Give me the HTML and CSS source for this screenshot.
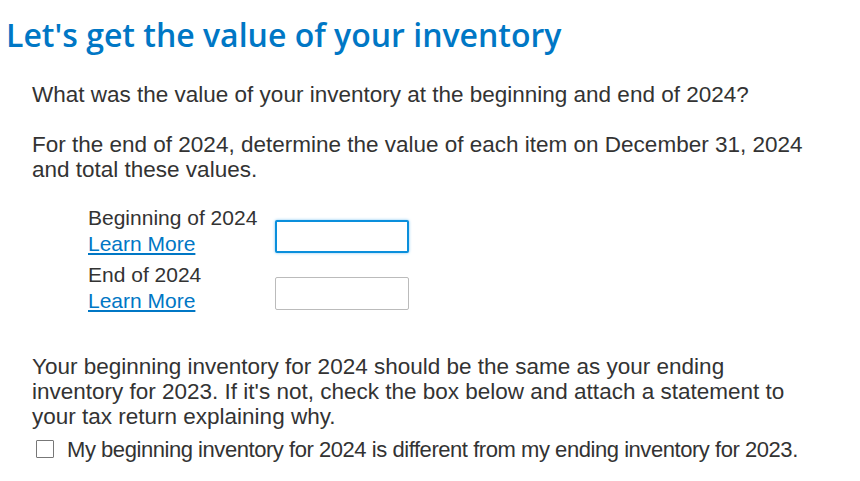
FILE: index.html
```html
<!DOCTYPE html>
<html lang="en">
<head>
    <meta charset="UTF-8">
    <meta name="viewport" content="width=device-width, initial-scale=1.0">
    <title>Inventory</title>
    <link rel="stylesheet" href="styles.css">
</head>
<body>
    <h1 class="title">Let's get the value of your inventory</h1>
    <div class="content">
        <p class="text">What was the value of your inventory at the beginning and end of 2024?</p>
        <p class="text">For the end of 2024, determine the value of each item on December 31, 2024 and total these values.</p>

        <div class="fields">
            <div class="field">
                <div class="field-label">
                    <span>Beginning of 2024</span>
                    <a href="#" class="learn">Learn More</a>
                </div>
                <input type="text" class="amount focused">
            </div>
            <div class="field">
                <div class="field-label">
                    <span>End of 2024</span>
                    <a href="#" class="learn">Learn More</a>
                </div>
                <input type="text" class="amount">
            </div>
        </div>

        <p class="text note">Your beginning inventory for 2024 should be the same as your ending inventory for 2023. If it's not, check the box below and attach a statement to your tax return explaining why.</p>
        <label class="check">
            <span class="box"></span>
            <span class="check-text">My beginning inventory for 2024 is different from my ending inventory for 2023.</span>
        </label>
    </div>
</body>
</html>
```

FILE: styles.css
```css
body {
    margin: 0;
    padding: 0 6px;
    font-family: "Liberation Sans", Arial, sans-serif;
    color: #333;
    background: #fff;
}
.title {
    font-family: "Open Sans", "Noto Sans", sans-serif;
    font-weight: 600;
    font-size: 32px;
    color: #0077c5;
    margin: 15px 0 0 0;
    line-height: 40px;
}
.content {
    padding-left: 26px;
    width: 778px;
}
.text {
    font-size: 22.5px;
    line-height: 25.5px;
    margin: 27px 0 0 0;
}
.text + .text {
    margin-top: 24px;
}
.fields {
    margin: 22px 0 0 56px;
}
.field {
    display: flex;
    align-items: flex-start;
    margin-bottom: 5px;
}
.field-label {
    display: flex;
    flex-direction: column;
    width: 187px;
    font-size: 21px;
    line-height: 26px;
}
.learn {
    color: #0077c5;
    text-decoration: underline;
}
.amount {
    width: 134px;
    height: 33px;
    box-sizing: border-box;
    border: 1px solid #bbb;
    border-radius: 2px;
    margin: 15px 0 0 0;
    padding: 0 6px;
    font-size: 16px;
}
.amount.focused {
    border: 2px solid #0a8fdc;
    box-shadow: 0 0 3px #7cc4f0;
}
.text.note {
    margin-top: 40px;
    line-height: 25px;
}
.check {
    display: flex;
    align-items: center;
    margin-top: 8px;
    padding-left: 4px;
}
.box {
    width: 16px;
    height: 16px;
    border: 1px solid #777;
    border-radius: 1px;
    margin-right: 13px;
}
.check-text {
    font-size: 22px;
    line-height: 25px;
    letter-spacing: -0.45px;
}
```
